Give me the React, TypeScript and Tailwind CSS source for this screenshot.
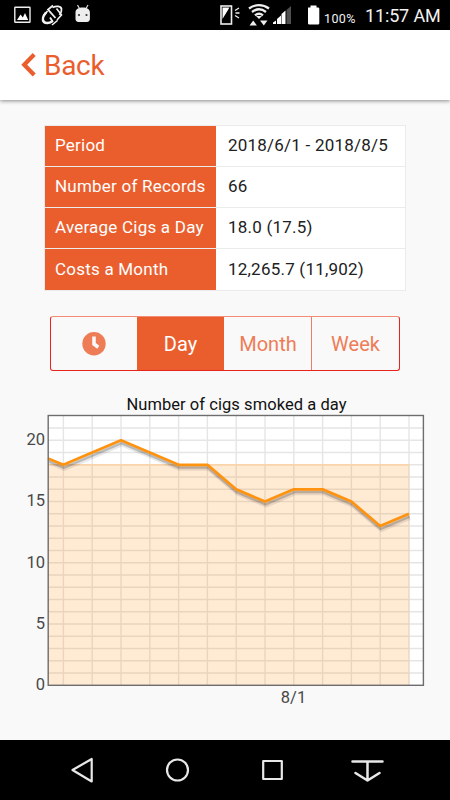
import React from 'react';

const stats = [
  { label: 'Period', value: '2018/6/1 - 2018/8/5' },
  { label: 'Number of Records', value: '66' },
  { label: 'Average Cigs a Day', value: '18.0 (17.5)' },
  { label: 'Costs a Month', value: '12,265.7 (11,902)' },
];

const cigs = [18, 19, 20, 19, 18, 18, 16, 15, 16, 16, 15, 13, 14];

// chart scale: one column per day, one row per cigarette
const xAt = (day: number) => 63.4 + day * 28.8;
const yAt = (count: number) => 295.3 - count * 12.25;

const StatusBar = () => (
  <div className="flex h-[30px] items-center bg-black text-[#f2f2f2]">
    <svg width="150" height="30" viewBox="0 0 150 30">
      <rect x="14.8" y="7.3" width="15.2" height="15" rx="0.5" fill="none" stroke="#eee" strokeWidth="1.4" />
      <path d="M17 20l3.6-5.6 2.2 3 2.2-4.4 3.2 7z" fill="#fff" />
      <g fill="none" stroke="#f2f2f2" strokeWidth="1.8">
        <path d="M53 5.5L48 9.5l7.5 8.500" />
        <path d="M52 25l5.500-4.500M56.500 8.500L61.500 15 57 20" strokeWidth="1.600" />
        <path d="M52.500 7.500c4-2 8.500-1.500 9 1.500.3 2-.5 4-2 6" />
        <path d="M46 12.500c-3 3.500-4 7.500-2 9.500 1.500 1.500 5 1.500 8-.5" strokeWidth="2.600" />
        <path d="M43.500 16l4-5M50 17.500l3 4.500" />
      </g>
      <path d="M75.5 12.5c0-3.500 3-5 7.200-5s7.200 1.500 7.200 5v6.500c0 2-1.500 3-3 3h-8.400c-1.500 0-3-1-3-3z" fill="#eee" />
      <path d="M79.5 8.500l-2-3.500M86 8.500l2-3.500" stroke="#ddd" strokeWidth="1.2" />
      <circle cx="79" cy="15" r="1.1" fill="#333" />
      <circle cx="86.5" cy="15" r="1.1" fill="#333" />
    </svg>
    <svg className="ml-[65px]" width="110" height="30" viewBox="215 0 110 30">
      <rect x="221" y="6" width="10.5" height="18" fill="none" stroke="#eee" strokeWidth="1.6" />
      <path d="M222.500 7.500h7L222.500 19z" fill="#fff" />
      <path d="M235 10.500l4-2.500M235.500 13h4M235 15.500l4 2.500" stroke="#eee" strokeWidth="1.300" />
      <g fill="none" stroke="#eee" strokeWidth="2.300">
        <path d="M249 8.500c6-4.500 14-4.500 20 0M252 12c4.500-3.500 9.500-3.500 14 0M255 15.300c2.500-2 5.500-2 8 0" />
      </g>
      <path d="M259 19l-3-3h6zM249.500 25.500l3.700-5 3.700 5zM260 20.500h7.500l-3.700 5z" fill="#eee" />
      <path d="M273 24v-1.500l3-2v3.500zM277 24v-5l4-3.500v8.500zM281.500 24v-10l4-3.500V24z" fill="#fff" />
      <path d="M286.500 24V10l4.500-4V24z" fill="#505050" />
      <path d="M308 7.500h2.500v-2h6v2h1.500q1.300 0 1.300 1.300v14.400q0 1.300-1.300 1.300h-8.700q-1.300 0-1.300-1.300z" fill="#fff" />
    </svg>
    <span className="-ml-[1px] mt-[8px] w-[41px] whitespace-nowrap text-[12.5px] leading-none tracking-[0.4px]">100%</span>
    <span className="mt-[2px] whitespace-nowrap text-[18px] leading-none tracking-[-0.15px]">11:57 AM</span>
  </div>
);

const Header = () => (
  <header className="relative flex h-[70px] items-center bg-white pl-[21px] text-[#ea5e2e] shadow-[0_1px_4px_rgba(0,0,0,0.45)]">
    <svg width="15" height="24" viewBox="0 0 15 24">
      <path d="M13.2 1.500L3.200 11.700l10 10.300" fill="none" stroke="currentColor" strokeWidth="4.200" />
    </svg>
    <span className="ml-[8px] mt-[2px] text-[28px] leading-none tracking-[-0.3px]">Back</span>
  </header>
);

const Stats = () => (
  <div className="mx-[44px] mt-[25px] grid h-[166px] grid-rows-4 border border-[#ebebeb] bg-white text-[17px] text-[#212121]">
    {stats.map(({ label, value }) => (
      <div key={label} className="flex border-b border-[#ebebeb] last:border-b-0">
        <div className="flex w-[171px] items-center whitespace-nowrap bg-[#ea5e2e] pl-[10px] tracking-[0.22px] text-white">{label}</div>
        <div className="flex flex-1 items-center pl-[12px] tracking-[0.22px]">{value}</div>
      </div>
    ))}
  </div>
);

const Tabs = () => (
  <div className="mx-[50px] mt-[25px] grid h-[55px] grid-cols-[86px_87px_87px_88px] overflow-hidden rounded-[3px] border border-[#e8231c] border-t-[#f28c74] text-[20px] text-[#ee7d57]">
    <div className="flex items-center justify-center">
      <svg width="24" height="24" viewBox="0 0 24 24">
        <circle cx="12" cy="11.7" r="11.7" fill="currentColor" />
        <path d="M12 4.500v7.500l4.300 3.200" fill="none" stroke="#f9f9f9" strokeWidth="3.600" />
      </svg>
    </div>
    <div className="flex items-center justify-center bg-[#ea5e2e] pt-[1px] text-white">Day</div>
    <div className="flex items-center justify-center pl-[1px] pt-[1px]">Month</div>
    <div className="flex items-center justify-center border-l border-[#ee7d66] pt-[1px]">Week</div>
  </div>
);

const Chart = () => {
  const line = cigs.map((count, day) => `L${xAt(day)} ${yAt(count)}`).join(' ');

  return (
    <svg className="mt-[19px] block" width="450" height="325" viewBox="0 0 450 325">
      <text x="236.5" y="20" textAnchor="middle" fontSize="16.5" letterSpacing="0.06" fill="#111">Number of cigs smoked a day</text>
      <rect x="48" y="25.5" width="375.5" height="269.8" fill="#fff" />
      <g stroke="#e5e5e5" strokeWidth="1.4">
        {cigs.map((_, day) => (
          <line key={day} x1={xAt(day)} x2={xAt(day)} y1="26" y2="295" />
        ))}
        {Array.from({ length: 21 }, (_, i) => (
          <line key={i} x1="48" x2="423" y1={yAt(i + 1)} y2={yAt(i + 1)} />
        ))}
      </g>
      <rect x="48" y={yAt(18)} width="361.5" height="220.5" fill="#ff8c0f" fillOpacity="0.18" />
      <line x1="48" x2="409.5" y1={yAt(18)} y2={yAt(18)} stroke="#fbd3a8" strokeWidth="1.5" />
      <g fill="none" strokeLinejoin="round">
        <path d={`M48 68.5 ${line}`} transform="translate(1 4)" stroke="#000" strokeOpacity="0.09" strokeWidth="4" />
        <path d={`M48 68.5 ${line}`} transform="translate(0.5 2.5)" stroke="#000" strokeOpacity="0.2" strokeWidth="3" />
        <path d={`M48 68.5 ${line}`} stroke="#ff930f" strokeWidth="2.7" />
      </g>
      <rect x="48.2" y="25.5" width="375.2" height="269.8" fill="none" stroke="#6d6d6d" strokeWidth="1.4" />
      <g fontSize="16.5" fill="#484848">
        {[0, 5, 10, 15, 20].map((count) => (
          <text key={count} x="45" y={yAt(count) + 4.7} textAnchor="end">{count}</text>
        ))}
        <text x="293.5" y="312.5" textAnchor="middle">8/1</text>
      </g>
    </svg>
  );
};

const NavBar = () => (
  <div className="mt-auto h-[60px] bg-black">
    <svg width="450" height="60" viewBox="0 0 450 60" fill="none" stroke="#e8e8e8" strokeWidth="2.2" strokeLinejoin="round" strokeLinecap="round">
      <path d="M72.500 30L91.700 19v22.500z" />
      <circle cx="177.500" cy="30" r="10.5" />
      <rect x="263.2" y="21" width="18.6" height="18" />
      <path d="M352.500 21.500h30M367.500 22v18.500M355.500 33l12 7.500 12-7.500" strokeWidth="2.500" />
    </svg>
  </div>
);

export default function App() {
  return (
    <div className="flex h-[800px] w-[450px] flex-col overflow-hidden bg-[#f9f9f9] font-['Roboto',sans-serif]">
      <StatusBar />
      <Header />
      <Stats />
      <Tabs />
      <Chart />
      <NavBar />
    </div>
  );
}
